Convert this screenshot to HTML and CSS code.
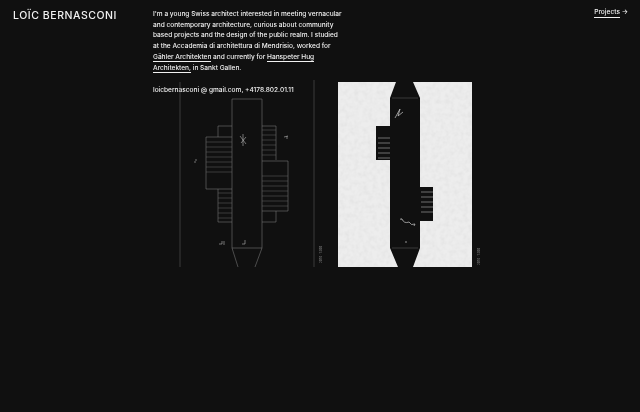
FILE: index.html
```html
<!DOCTYPE html>
<html lang="en">
<head>
    <meta charset="UTF-8">
    <meta name="viewport" content="width=device-width, initial-scale=1.0">
    <title>Loïc Bernasconi</title>
    <link rel="stylesheet" href="styles.css">
</head>
<body>
    <div class="page">
        <h1 class="logo">Loïc Bernasconi</h1>
        <main class="main">
            <p class="intro">I'm a young Swiss architect interested in meeting vernacular<br>
                and contemporary architecture, curious about community<br>
                based projects and the design of the public realm. I studied<br>
                at the Accademia di architettura di Mendrisio, worked for<br>
                <a href="#">Gähler Architekten</a> and currently for <a href="#">Hanspeter Hug</a><br>
                <a href="#">Architekten,</a> in Sankt Gallen.</p>
            <p class="contact">loicbernasconi @ gmail.com, +4178.802.01.11</p>
            <svg class="plates" viewBox="170 78 320 192" width="320" height="192" aria-hidden="true">
                <defs>
                    <filter id="paper" x="0" y="0" width="100%" height="100%">
                        <feTurbulence type="fractalNoise" baseFrequency="0.22" numOctaves="2" seed="4"/>
                        <feColorMatrix values="0 0 0 0 0.7  0 0 0 0 0.7  0 0 0 0 0.7  0.8 0 0 0 -0.3"/>
                        <feComposite in2="SourceGraphic" operator="over"/>
                    </filter>
                </defs>

                <!-- plan, line drawing -->
                <g class="plan">
                    <path class="rules" d="M180 82V267M314 80V267"/>
                    <path d="M232 99H262V248H232ZM232 126H218V137M262 126H276V160M206 137H232M206 137V189H232M218 189V222H232M262 161H288V211H262M276 211V222H262"/>
                    <path d="M232 248L238 267M262 248L255 267"/>
                    <path class="treads" d="M206 142H232M206 147H232M206 152H232M206 157H232M206 162H232M206 167H232M206 172H232
                        M218 193H232M218 198H232M218 203H232M218 208H232M218 213H232M218 218H232
                        M262 130H276M262 135H276M262 140H276M262 145H276M262 150H276M262 155H276
                        M262 176H288M262 181H288M262 186H288M262 191H288M262 196H288M262 201H288M262 206H288"/>
                    <path class="marks" d="M240 136L246 144M246 137L241 143M243 134V146M284 137L288 136M287 136V139M195 161V163M195 160H197M222 241V244H219M224 241V245M245 240V244H242"/>
                </g>

                <!-- plan, negative on paper -->
                <rect x="338" y="82" width="134" height="185" fill="#f0f0f0" filter="url(#paper)"/>
                <path class="void" d="M396 82H413L420 98V187H433V221H420V248L413 267H398L390 248V160H376V126H390V98Z"/>
                <path class="notch" d="M378 138H390M378 143H390M378 148H390M378 153H390M378 158H390M421 192H433M421 197H433M421 202H433M421 207H433M421 212H433"/>
                <path class="scribble" d="M395 118L400 109L398 116L403 112M401 220Q400 218 402 219Q404 224 409 222Q411 226 415 224L414 226M405 242H407"/>
                <path class="faint" d="M392 98H418M392 248H418"/>

                <text class="tiny" transform="translate(322 263) rotate(-90)">2014 · 1:200</text>
                <text class="tiny" transform="translate(480 265) rotate(-90)">2014 · 1:200</text>
            </svg>
        </main>
        <a class="projects" href="#"><span class="projects-label">Projects</span> →</a>
    </div>
</body>
</html>
```

FILE: styles.css
```css
body, html {
    margin: 0;
    padding: 0;
    height: 100%;
    background-color: #101010;
    color: #f4f4f4;
    font-family: 'Inter', 'Liberation Sans', sans-serif;
    overflow: hidden;
}
a {
    color: inherit;
    text-decoration: none;
}
.page {
    display: flex;
    align-items: flex-start;
    padding: 9px 12px 0 13px;
    opacity: 0.99;
}
.logo {
    width: 140px;
    flex-shrink: 0;
    margin: 0;
    font-size: 10.5px;
    font-weight: 500;
    line-height: 14px;
    letter-spacing: 0.55px;
    text-transform: uppercase;
}
.main {
    flex: 1;
}
.intro, .contact {
    margin: 0;
    font-size: 6.55px;
    font-weight: 500;
    line-height: 10.7px;
    white-space: nowrap;
}
.intro a {
    display: inline-block;
    line-height: 8.6px;
    border-bottom: 1px solid #f4f4f4;
}
.contact {
    margin-top: 12px;
}
.plates {
    display: block;
    margin: -18px 0 0 17px;
    overflow: visible;
}
.plan path {
    fill: none;
    stroke: #777;
    stroke-width: 0.6;
}
.plan .rules {
    stroke: #5c5c5c;
}
.plan .treads {
    stroke: #6a6a6a;
    stroke-width: 0.5;
}
.plan .marks {
    stroke: #bbb;
}
.void {
    fill: #101010;
}
.notch {
    fill: none;
    stroke: #b4b4b4;
    stroke-width: 0.6;
}
.scribble {
    fill: none;
    stroke: #d0d0d0;
    stroke-width: 0.7;
}
.faint {
    fill: none;
    stroke: #666;
    stroke-width: 0.5;
}
.tiny {
    font-size: 3px;
    fill: #999;
}
.projects {
    margin-top: -1px;
    font-size: 6.6px;
    font-weight: 500;
    line-height: 9px;
    white-space: nowrap;
}
.projects-label {
    display: inline-block;
    border-bottom: 1px solid #f4f4f4;
}
```
